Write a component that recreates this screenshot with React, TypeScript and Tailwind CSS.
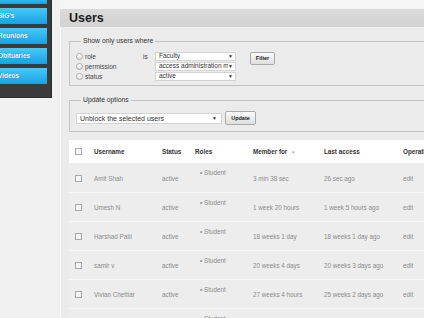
import React from "react";

const users = [
  { name: "Amit Shah", member: "3 min 38 sec", last: "26 sec ago" },
  { name: "Umesh N", member: "1 week 20 hours", last: "1 week 5 hours ago" },
  { name: "Harshad Patil", member: "18 weeks 1 day", last: "18 weeks 1 day ago" },
  { name: "samir v", member: "20 weeks 4 days", last: "20 weeks 3 days ago" },
  { name: "Vivian Chettiar", member: "27 weeks 4 hours", last: "25 weeks 2 days ago" },
  { name: "", member: "", last: "" },
];

const SideButton = ({ label }: { label: string }) => (
  <div className="h-[16px] w-[47px] bg-gradient-to-b from-[#45cbf8] to-[#1a9fe3] flex items-center overflow-hidden">
    <span className="-ml-[2px] text-[6.5px] font-bold text-white [text-shadow:0_0_1px_#0a5a8a]">{label}</span>
  </div>
);

const Radio = () => (
  <span className="inline-block w-[7px] h-[7px] rounded-full border border-[#a8a8a8] bg-gradient-to-b from-white to-[#e4e4e4]" />
);

const Check = () => (
  <span className="inline-block w-[7px] h-[7px] border border-[#a9a9a9] bg-[#f5f5f5]" />
);

const Select = ({ value, w }: { value: string; w: string }) => (
  <div className={`h-[9px] ${w} bg-white border border-[#d4d4d4] flex items-center justify-between pl-[3px] pr-[2px]`}>
    <span className="text-[6.5px] leading-none text-[#333] whitespace-nowrap overflow-hidden">{value}</span>
    <span className="text-[5px] leading-none text-[#333]">▼</span>
  </div>
);

const App = () => {
  return (
    <div className="w-[424px] h-[318px] overflow-hidden bg-[#f1f1f1] flex font-['Liberation_Sans',Arial,sans-serif]">
      <div className="w-[60px] shrink-0">
        <div className="w-[52px] h-[98px] bg-[#3b3b3b] border-r border-b border-[#2c2c2c] flex flex-col gap-[4px]">
          <div className="h-[4px] w-[47px] bg-gradient-to-b from-[#2fb8f0] to-[#1a9fe3]" />
          <SideButton label="SIG's" />
          <SideButton label="Reunions" />
          <SideButton label="Obituaries" />
          <SideButton label="Videos" />
        </div>
      </div>

      <div className="w-[364px] shrink-0 flex flex-col pt-[9px] bg-[#f5f5f5]">
        <div className="h-[18px] bg-gradient-to-b from-[#dadada] to-[#d2d2d2] pl-[9px] flex items-center">
          <span className="text-[12.5px] font-bold text-[#1c1c1c]">Users</span>
        </div>

        <div className="flex-1 bg-[#ebebeb] border-l border-[#fbfbfb] pl-[8px] pt-[10px]">
          <fieldset className="w-[400px] border border-[#c3c3c3] pl-[6px] pt-[7px] pb-[4px]">
            <legend className="ml-[5px] px-[2px] text-[6.8px] leading-[8px] text-[#333]">Show only users where</legend>
            <div className="flex">
              <div className="w-[67px] flex flex-col gap-[1px]">
                {["role", "permission", "status"].map((r) => (
                  <div key={r} className="h-[9px] flex items-center gap-[2px]">
                    <Radio />
                    <span className="text-[6.5px] text-[#444]">{r}</span>
                  </div>
                ))}
              </div>
              <div className="w-[12px] h-[9px] flex items-center">
                <span className="text-[6.5px] text-[#444]">is</span>
              </div>
              <div className="flex flex-col gap-[1px]">
                <Select value="Faculty" w="w-[81px]" />
                <Select value="access administration m" w="w-[81px]" />
                <Select value="active" w="w-[81px]" />
              </div>
              <div className="ml-[14px] h-[13px] w-[25px] rounded-[2px] border border-[#a9a9a9] bg-gradient-to-b from-[#fafafa] to-[#dedede] flex items-center justify-center">
                <span className="text-[5.5px] font-bold text-[#222]">Filter</span>
              </div>
            </div>
          </fieldset>

          <fieldset className="w-[400px] mt-[10px] border border-[#c3c3c3] pl-[6px] pt-[7px] pb-[6px]">
            <legend className="ml-[5px] px-[2px] text-[6.8px] leading-[8px] text-[#333]">Update options</legend>
            <div className="flex items-center h-[14px]">
              <div className="h-[11px] w-[146px] bg-white border border-[#d4d4d4] flex items-center justify-between pl-[3px] pr-[4px]">
                <span className="text-[7px] leading-none text-[#333]">Unblock the selected users</span>
                <span className="text-[5px] leading-none text-[#333]">▼</span>
              </div>
              <div className="ml-[3px] h-[14px] w-[31px] rounded-[2px] border border-[#a9a9a9] bg-gradient-to-b from-[#fafafa] to-[#dedede] flex items-center justify-center">
                <span className="text-[5.5px] font-bold text-[#222]">Update</span>
              </div>
            </div>
          </fieldset>

          <table className="mt-[8px] w-[420px] table-fixed border-collapse">
            <colgroup>
              <col className="w-[25px]" />
              <col className="w-[68px]" />
              <col className="w-[33px]" />
              <col className="w-[58px]" />
              <col className="w-[71px]" />
              <col className="w-[79px]" />
              <col className="w-[86px]" />
            </colgroup>
            <thead>
              <tr className="h-[23px] bg-white text-[6.3px] font-bold text-[#333] text-left">
                <th className="pl-[6px] font-bold"><div className="flex items-center"><Check /></div></th>
                <th className="font-bold">Username</th>
                <th className="font-bold">Status</th>
                <th className="font-bold">Roles</th>
                <th className="font-bold">
                  Member for <span className="ml-[2px] text-[4.5px] text-[#aaa] font-normal">▼</span>
                </th>
                <th className="font-bold">Last access</th>
                <th className="font-bold whitespace-nowrap">Operations</th>
              </tr>
            </thead>
            <tbody>
              {users.map((u, i) => (
                <tr key={i} className="h-[29px] bg-[#ededed] border-b border-[#f7f7f7] text-[6.3px] text-[#8a8a8a]">
                  <td className="pl-[6px] align-middle"><div className="flex items-center pt-[2px]"><Check /></div></td>
                  <td className="pt-[2px]">{u.name}</td>
                  <td className="pt-[2px]">{u.name ? "active" : ""}</td>
                  <td className="align-top pt-[5px]">
                    <span className="pl-[5px]">•</span> <span>Student</span>
                  </td>
                  <td className="pt-[2px]">{u.member}</td>
                  <td className="pt-[2px]">{u.last}</td>
                  <td className="pt-[2px]">{u.name ? "edit" : ""}</td>
                </tr>
              ))}
            </tbody>
          </table>
        </div>
      </div>
    </div>
  );
};

export default App;
